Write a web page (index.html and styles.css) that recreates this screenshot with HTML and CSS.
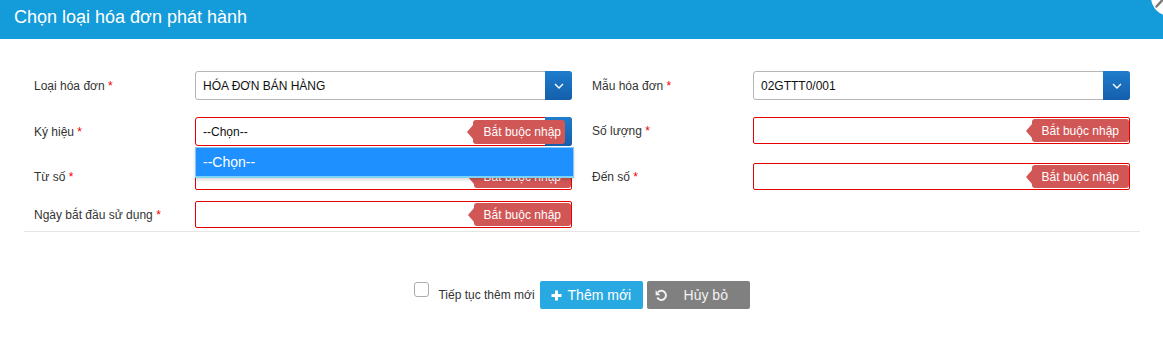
FILE: index.html
```html
<!DOCTYPE html>
<html lang="vi">
<head>
<meta charset="utf-8">
<title>Chọn loại hóa đơn phát hành</title>
<link rel="stylesheet" href="styles.css">
</head>
<body>
<div class="modal">
  <div class="modal-header">
    <h4 class="modal-title">Chọn loại hóa đơn phát hành</h4>
    <span class="close-btn">
      <svg width="38" height="38" viewBox="0 0 38 38"><line x1="11.5" y1="22" x2="5.5" y2="28.5" stroke="#7a7a7a" stroke-width="2.5" stroke-linecap="round"/></svg>
    </span>
  </div>
  <div class="modal-body">
    <div class="form-grid">
      <div class="field">
        <label class="field-label">Loại hóa đơn <span class="req">*</span></label>
        <div class="select">
          <span class="select-text">HÓA ĐƠN BÁN HÀNG</span>
          <span class="select-btn"><svg width="10" height="6" viewBox="0 0 10 6"><polyline points="1,1 5,5 9,1" fill="none" stroke="#fff" stroke-width="1.4"/></svg></span>
        </div>
      </div>
      <div class="field">
        <label class="field-label">Mẫu hóa đơn <span class="req">*</span></label>
        <div class="select">
          <span class="select-text">02GTTT0/001</span>
          <span class="select-btn"><svg width="10" height="6" viewBox="0 0 10 6"><polyline points="1,1 5,5 9,1" fill="none" stroke="#fff" stroke-width="1.4"/></svg></span>
        </div>
      </div>
      <div class="field">
        <label class="field-label">Ký hiệu <span class="req">*</span></label>
        <div class="select is-invalid">
          <span class="select-text">--Chọn--</span>
          <span class="select-btn"><svg width="10" height="6" viewBox="0 0 10 6"><polyline points="1,1 5,5 9,1" fill="none" stroke="#fff" stroke-width="1.4"/></svg></span>
          <span class="tip tip-select">Bắt buộc nhập</span>
          <div class="dropdown"><span class="dropdown-item">--Chọn--</span></div>
        </div>
      </div>
      <div class="field">
        <label class="field-label">Số lượng <span class="req">*</span></label>
        <div class="input"><span class="tip">Bắt buộc nhập</span></div>
      </div>
      <div class="field">
        <label class="field-label">Từ số <span class="req">*</span></label>
        <div class="input"><span class="tip">Bắt buộc nhập</span></div>
      </div>
      <div class="field">
        <label class="field-label">Đến số <span class="req">*</span></label>
        <div class="input"><span class="tip">Bắt buộc nhập</span></div>
      </div>
      <div class="field">
        <label class="field-label">Ngày bắt đầu sử dụng <span class="req">*</span></label>
        <div class="input"><span class="tip">Bắt buộc nhập</span></div>
      </div>
    </div>
    <div class="divider"></div>
    <div class="modal-footer">
      <span class="checkbox"></span>
      <span class="check-label">Tiếp tục thêm mới</span>
      <button class="btn btn-primary" type="button">
        <svg width="11" height="11" viewBox="0 0 11 11"><path d="M5.5 0.5v10M0.5 5.5h10" stroke="#fff" stroke-width="3"/></svg>
        <span>Thêm mới</span>
      </button>
      <button class="btn btn-default" type="button">
        <svg width="12" height="12" viewBox="0 0 12 12"><path d="M3 3.2A4.6 4.6 0 1 1 2.3 8.6" fill="none" stroke="#f2f2f2" stroke-width="2"/><polygon points="0.6,1.2 0.6,6.2 5.4,6.2" fill="#f2f2f2"/></svg>
        <span>Hủy bỏ</span>
      </button>
    </div>
  </div>
</div>
</body>
</html>
```
FILE: styles.css
```css
html, body {
  margin: 0;
  padding: 0;
  background: #fff;
  font-family: Arial, "Liberation Sans", sans-serif;
}

.modal {
  position: relative;
  height: 346px;
  overflow: hidden;
}

.modal-header {
  position: relative;
  height: 39px;
  box-sizing: border-box;
  padding: 0 14px;
  background: #139bda;
}

.modal-title {
  margin: 0;
  padding-top: 7px;
  font-size: 18px;
  line-height: 20px;
  font-weight: normal;
  color: #fff;
}

.close-btn {
  position: absolute;
  right: -26px;
  top: -22px;
  width: 38px;
  height: 38px;
  border-radius: 50%;
  background: #fff;
}

.close-btn svg {
  display: block;
}

.modal-body {
  padding: 32px 23px 0 24px;
}

.form-grid {
  display: grid;
  grid-template-columns: 558px 558px;
  grid-template-rows: 46px 46px 38px 27px;
  align-items: start;
}

.field {
  display: grid;
  grid-template-columns: 161px 377px;
  padding: 0 10px;
  align-items: center;
}

.field-label {
  font-size: 12px;
  color: #333;
}

.req {
  color: #e00;
}

.select {
  position: relative;
  display: flex;
  align-items: center;
  height: 29px;
  box-sizing: border-box;
  border: 1px solid #b5b5b5;
  border-radius: 3px;
  background: #fff;
}

.select.is-invalid {
  border-color: #e60000;
}

.select-text {
  flex: 1;
  padding-left: 7px;
  font-size: 12px;
  color: #111;
}

.select-btn {
  align-self: stretch;
  width: 27px;
  margin: -1px -1px -1px 0;
  display: flex;
  align-items: center;
  justify-content: center;
  background: linear-gradient(#1e7dcd, #145fab);
  border-radius: 0 3px 3px 0;
}

.input {
  position: relative;
  height: 27px;
  box-sizing: border-box;
  border: 1px solid #e60000;
  border-radius: 2px;
  background: #fff;
}

.tip {
  position: absolute;
  right: 0;
  top: 1px;
  bottom: 1px;
  z-index: 2;
  display: flex;
  align-items: center;
  padding: 0 10px;
  background: #d15656;
  color: #fff;
  font-size: 12px;
  border-radius: 3px;
  white-space: nowrap;
}

.tip::before {
  content: "";
  position: absolute;
  left: -6px;
  top: 50%;
  margin-top: -7px;
  border-right: 6px solid #d15656;
  border-top: 7px solid transparent;
  border-bottom: 7px solid transparent;
}

.tip-select {
  right: 6px;
  top: 2px;
  bottom: 1px;
  padding: 0 4px 0 11px;
}

.dropdown {
  position: absolute;
  left: -1px;
  top: calc(100% + 2px);
  z-index: 10;
  width: 379px;
  height: 31px;
  box-sizing: border-box;
  display: flex;
  align-items: center;
  background: #1e90ff;
  border: 1px solid #8cc6f5;
  border-bottom: 2px solid #7fd3f3;
  box-shadow: 0 2px 3px rgba(0, 0, 0, 0.15);
}

.dropdown-item {
  padding-left: 7px;
  font-size: 14px;
  color: #fff;
}

.divider {
  margin-top: 3px;
  height: 1px;
  background: #e5e5e5;
}

.modal-footer {
  display: flex;
  justify-content: center;
  align-items: center;
  padding-top: 49px;
}

.checkbox {
  align-self: flex-start;
  margin-top: 1px;
  width: 15px;
  height: 15px;
  box-sizing: border-box;
  border: 1px solid #acacac;
  border-radius: 3px;
  background: #fff;
  margin-right: 9px;
}

.check-label {
  font-size: 12px;
  color: #333;
  margin-right: 5px;
}

.btn {
  display: flex;
  align-items: center;
  width: 103px;
  height: 28px;
  box-sizing: border-box;
  border: none;
  border-radius: 2px;
  font-family: inherit;
  font-size: 14px;
  color: #fff;
  cursor: pointer;
}

.btn-primary {
  background: #29a9e1;
  padding: 0 0 0 11px;
  gap: 6px;
}

.btn-default {
  background: #808080;
  color: #f2f2f2;
  padding: 0 0 0 8px;
  gap: 17px;
  margin-left: 4px;
}

.btn svg {
  display: block;
  flex: none;
}
```
